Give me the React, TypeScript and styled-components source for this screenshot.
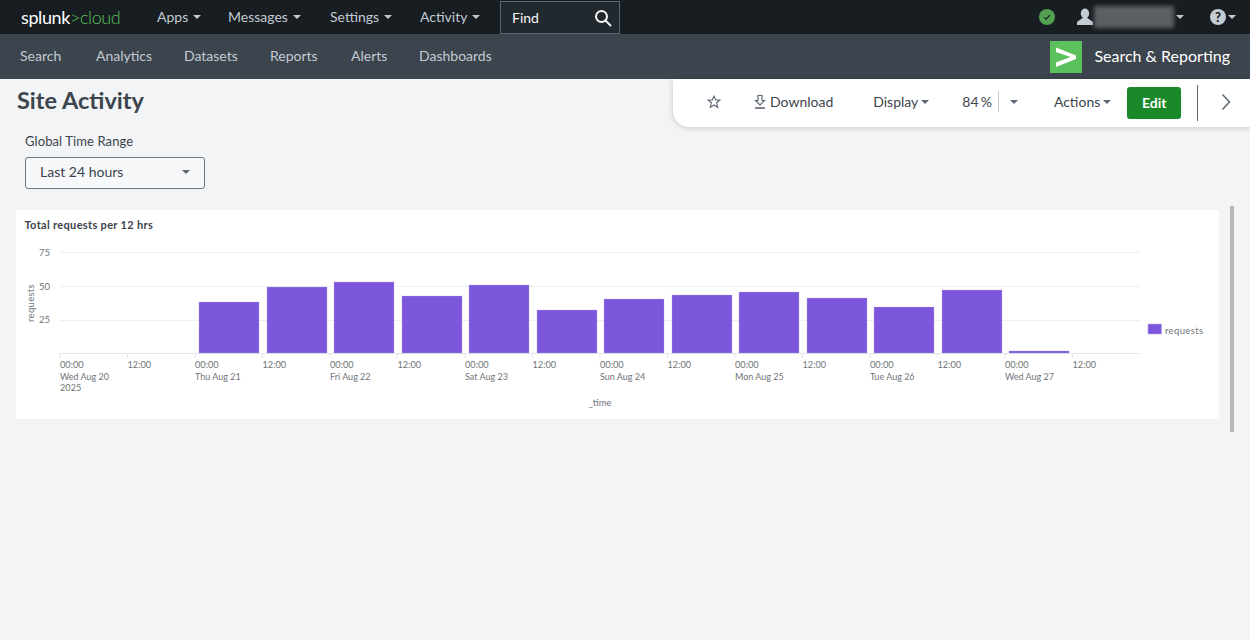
import React from "react";
import styled, { createGlobalStyle } from "styled-components";

const Global = createGlobalStyle`
  html, body { margin: 0; padding: 0; height: 100%; background: #f2f4f5; }
  body { font-family: Lato, "Liberation Sans", sans-serif; overflow: hidden; }
  #root { height: 100%; }
`;

const Page = styled.div`
  position: relative;
  width: 1250px;
  height: 640px;
  overflow: hidden;
  background: #f2f4f5;
`;

const TopBar = styled.header`
  height: 34px;
  background: #171d21;
  display: flex;
  align-items: center;
  padding-left: 21px;
  padding-right: 14px;
`;

const Logo = styled.div`
  width: 136px;
  margin-top: -1px;
  font-size: 18px;
  line-height: 34px;
  letter-spacing: -0.4px;
  color: #fff;
  span { color: #5cc05c; font-weight: 300; }
`;

const TopMenu = styled.nav`
  display: flex;
  align-items: center;
  height: 33px;
  margin-top: -1px;
`;

const TopLink = styled.a<{ $w: number }>`
  width: ${(p) => p.$w}px;
  display: flex;
  align-items: center;
  gap: 5px;
  font-size: 14px;
  color: #c3cbd4;
`;

const Caret = styled.i<{ $c?: string; $s?: number }>`
  display: inline-block;
  width: 0;
  height: 0;
  border-left: ${(p) => p.$s ?? 4}px solid transparent;
  border-right: ${(p) => p.$s ?? 4}px solid transparent;
  border-top: ${(p) => p.$s ?? 4}px solid ${(p) => p.$c ?? "#c3cbd4"};
`;

const Find = styled.div`
  width: 120px;
  height: 33px;
  margin-top: 1px;
  box-sizing: border-box;
  border: 1px solid #5c6773;
  background: #22292e;
  display: flex;
  align-items: center;
  justify-content: space-between;
  padding: 0 7px 0 11px;
  font-size: 14px;
  color: #f2f4f5;
`;

const TopRight = styled.div`
  margin-left: auto;
  display: flex;
  align-items: center;
`;

const Status = styled.span`
  width: 16px;
  height: 16px;
  margin-right: 21px;
  border-radius: 50%;
  background: #53a051;
  display: flex;
  align-items: center;
  justify-content: center;
`;

const BlurName = styled.span`
  width: 80px;
  height: 22px;
  margin-right: 2px;
  background: #5b6064;
  filter: blur(2px);
`;

const HelpWrap = styled.span`
  margin-left: 26px;
  display: flex;
  align-items: center;
  gap: 2px;
`;

const SubBar = styled.div`
  height: 45px;
  background: #3c444d;
  display: flex;
  align-items: center;
  padding: 0 20px;
`;

const SubMenu = styled.nav`
  display: flex;
  margin-top: -2px;
  font-size: 14px;
  color: #c3cbd4;
`;

const SubLink = styled.a<{ $w: number }>`
  width: ${(p) => p.$w}px;
`;

const AppBrand = styled.div`
  margin-left: auto;
  display: flex;
  align-items: center;
  gap: 12px;
  font-size: 16px;
  line-height: 20px;
  color: #fff;
`;

const BrandName = styled.span`
  margin-top: -2px;
`;

const Content = styled.main`
  padding: 0 31px 0 16px;
`;

const Title = styled.h1`
  margin: 0;
  padding-top: 6px;
  padding-left: 1px;
  font-size: 23.5px;
  line-height: 30px;
  font-weight: 700;
  color: #3c444d;
`;

const Field = styled.div`
  margin: 18px 0 0 9px;
`;

const FieldLabel = styled.div`
  font-size: 13px;
  line-height: 16px;
  letter-spacing: 0.1px;
  color: #3c444d;
`;

const Select = styled.div`
  margin-top: 8px;
  width: 180px;
  height: 32px;
  box-sizing: border-box;
  border: 1px solid #6b7785;
  border-radius: 3px;
  background: #f7f8fa;
  display: flex;
  align-items: center;
  justify-content: space-between;
  padding: 0 14px 3px 14px;
  font-size: 14px;
  color: #3c444d;
`;

const Panel = styled.section`
  margin-top: 21px;
  height: 209px;
  background: #fff;
`;

const Chart = styled.svg`
  display: block;
  font-family: Lato, "Liberation Sans", sans-serif;
`;

const Scrollbar = styled.div`
  position: absolute;
  left: 1230px;
  top: 206px;
  width: 4px;
  height: 226px;
  background: #b8b8b8;
`;

const Toolbar = styled.div`
  position: absolute;
  left: 673px;
  top: 79px;
  width: 577px;
  height: 48px;
  box-sizing: border-box;
  padding-bottom: 3px;
  background: #fff;
  border-bottom-left-radius: 16px;
  box-shadow: 0 1px 6px rgba(0, 0, 0, 0.18);
  display: flex;
  align-items: center;
  font-size: 14px;
  color: #3c444d;
`;

const ToolItem = styled.span<{ $ml: number }>`
  margin-left: ${(p) => p.$ml}px;
  display: inline-flex;
  align-items: center;
  gap: 3px;
  word-spacing: -1.5px;
`;

const ZoomDivider = styled.span`
  width: 1px;
  height: 21px;
  margin-left: 6px;
  background: #c3cbd4;
`;

const EditButton = styled.button`
  margin: 3px 0 0 16px;
  width: 54px;
  height: 32px;
  padding: 0 0 2px;
  border: 0;
  border-radius: 3px;
  background: #1a8929;
  color: #fff;
  font: 700 14px Lato, "Liberation Sans", sans-serif;
`;

const BigDivider = styled.span`
  width: 1px;
  height: 36px;
  margin: 3px 0 0 16px;
  background: #5c6773;
`;

const top = ["Apps", "Messages", "Settings", "Activity"];
const topW = [71, 102, 90, 80];
const sub: [string, number][] = [
  ["Search", 76], ["Analytics", 88], ["Datasets", 86], ["Reports", 81], ["Alerts", 68], ["Dashboards", 90],
];

const bars: [number, number][] = [
  [199, 302], [267, 287], [334, 282], [402, 296], [469, 285], [537, 310], [604, 299],
  [672, 295], [739, 292], [807, 298], [874, 307], [942, 290], [1009, 351],
];
const days = ["Wed Aug 20", "Thu Aug 21", "Fri Aug 22", "Sat Aug 23", "Sun Aug 24", "Mon Aug 25", "Tue Aug 26", "Wed Aug 27"];
const OX = 16;
const OY = 210;
const ticks = Array.from({ length: 16 }, (_, i) => 60 + i * 67.5);
const LABEL = "#6f7478";

function ChartSvg() {
  return (
    <Chart width={1203} height={209} viewBox={`${OX} ${OY} 1203 209`}>
      <text x={24.5} y={229} fontSize={11} fontWeight={700} letterSpacing={0.33} fill="#3c444d">Total requests per 12 hrs</text>
      {[252.5, 286.5, 320.5].map((y) => (
        <line key={y} x1={60} x2={1140} y1={y} y2={y} stroke="#eceef0" />
      ))}
      {[["75", 256], ["50", 290], ["25", 323]].map(([t, y]) => (
        <text key={t} x={50} y={y} fontSize={9.5} textAnchor="end" fill={LABEL}>{t}</text>
      ))}
      <text transform="translate(34 303) rotate(-90)" fontSize={9.5} letterSpacing={0.3} textAnchor="middle" fill={LABEL}>requests</text>
      <line x1={60} x2={1140} y1={353.5} y2={353.5} stroke="#e4e6e8" />
      {ticks.map((x) => (
        <line key={x} x1={x} x2={x} y1={353} y2={358} stroke="#e4e6e8" />
      ))}
      {bars.map(([x, y]) => (
        <rect key={x} x={x} y={y} width={60} height={353 - y} fill="#7c56db" stroke="#b7a4ec" strokeWidth={0.3} />
      ))}
      {ticks.map((x, i) => (
        <text key={x} x={x} y={368} fontSize={9.2} fill={LABEL}>{i % 2 === 0 ? "00:00" : "12:00"}</text>
      ))}
      {days.map((d, i) => (
        <text key={d} x={60 + i * 135} y={380} fontSize={9} fill={LABEL}>{d}</text>
      ))}
      <text x={60} y={391} fontSize={9.2} fill={LABEL}>2025</text>
      <text x={600} y={406} fontSize={9.5} textAnchor="middle" fill={LABEL}>_time</text>
      <rect x={1148} y={324} width={13.5} height={10} fill="#7c56db" stroke="#b7a4ec" strokeWidth={0.6} />
      <text x={1165} y={334} fontSize={9.5} letterSpacing={0.35} fill={LABEL}>requests</text>
    </Chart>
  );
}

export default function App() {
  return (
    <Page>
      <Global />
      <TopBar>
        <Logo>splunk<span>&gt;cloud</span></Logo>
        <TopMenu>
          {top.map((t, i) => (
            <TopLink key={t} $w={topW[i]}>{t}<Caret /></TopLink>
          ))}
        </TopMenu>
        <Find>
          Find
          <svg width="18" height="18" viewBox="0 0 18 18" fill="none" stroke="#f2f4f5" strokeWidth="2">
            <circle cx="7.5" cy="7.5" r="5.5" />
            <path d="M11.5 11.5L16.5 16.5" strokeLinecap="round" />
          </svg>
        </Find>
        <TopRight>
          <Status>
            <svg width="8" height="8" viewBox="0 0 8 8" fill="none" stroke="#1c2a20" strokeWidth="1.2">
              <path d="M1 4.2L3.2 6.2L7 2" />
            </svg>
          </Status>
          <svg width="18" height="18" viewBox="0 0 18 18" fill="#c3cbd4">
            <ellipse cx="9" cy="5.5" rx="4.2" ry="5" />
            <path d="M6.5 10L1 14V17H17V14L11.5 10Z" />
          </svg>
          <BlurName />
          <Caret />
          <HelpWrap>
            <svg width="16" height="16" viewBox="0 0 16 16">
              <circle cx="8" cy="8" r="8" fill="#c3cbd4" />
              <text x="8" y="12.5" fontSize="13" fontWeight="900" textAnchor="middle" fill="#171d21">?</text>
            </svg>
            <Caret />
          </HelpWrap>
        </TopRight>
      </TopBar>
      <SubBar>
        <SubMenu>{sub.map(([s, w]) => <SubLink key={s} $w={w}>{s}</SubLink>)}</SubMenu>
        <AppBrand>
          <svg width="32" height="32" viewBox="0 0 32 32">
            <rect width="32" height="32" fill="#5cc05c" />
            <path d="M6 6.5L26 14.5V18L6 26V21.5L20.5 16L6 11Z" fill="#fff" />
          </svg>
          <BrandName>Search &amp; Reporting</BrandName>
        </AppBrand>
      </SubBar>
      <Content>
        <Title>Site Activity</Title>
        <Field>
          <FieldLabel>Global Time Range</FieldLabel>
          <Select>Last 24 hours<Caret $c="#5c6773" /></Select>
        </Field>
        <Panel><ChartSvg /></Panel>
      </Content>
      <Scrollbar />
      <Toolbar>
        <ToolItem $ml={34}>
          <svg width="14" height="14" viewBox="0 0 14 14" fill="none" stroke="#5c6773" strokeWidth="1.1">
            <path d="M7 1.2L8.7 5H12.8L9.6 7.8L10.7 12.4L7 10L3.3 12.4L4.4 7.8L1.2 5H5.3Z" />
          </svg>
        </ToolItem>
        <ToolItem $ml={32}>
          <svg width="14" height="15" viewBox="0 0 14 15" fill="none" stroke="#5c6773" strokeWidth="1.2">
            <path d="M5 1.5H9V6.5H11.5L7 11L2.5 6.5H5Z" />
            <path d="M2 14H12" strokeWidth="1.6" />
          </svg>
          Download
        </ToolItem>
        <ToolItem $ml={40}>Display<Caret $c="#5c6773" /></ToolItem>
        <ToolItem $ml={33}>84 %</ToolItem>
        <ZoomDivider />
        <ToolItem $ml={11}><Caret $c="#5c6773" /></ToolItem>
        <ToolItem $ml={36}>Actions<Caret $c="#5c6773" /></ToolItem>
        <EditButton>Edit</EditButton>
        <BigDivider />
        <ToolItem $ml={23}>
          <svg width="10" height="18" viewBox="0 0 10 18" fill="none" stroke="#5c6773" strokeWidth="1.5">
            <path d="M1.5 1.5L8.5 9L1.5 16.5" />
          </svg>
        </ToolItem>
      </Toolbar>
    </Page>
  );
}
